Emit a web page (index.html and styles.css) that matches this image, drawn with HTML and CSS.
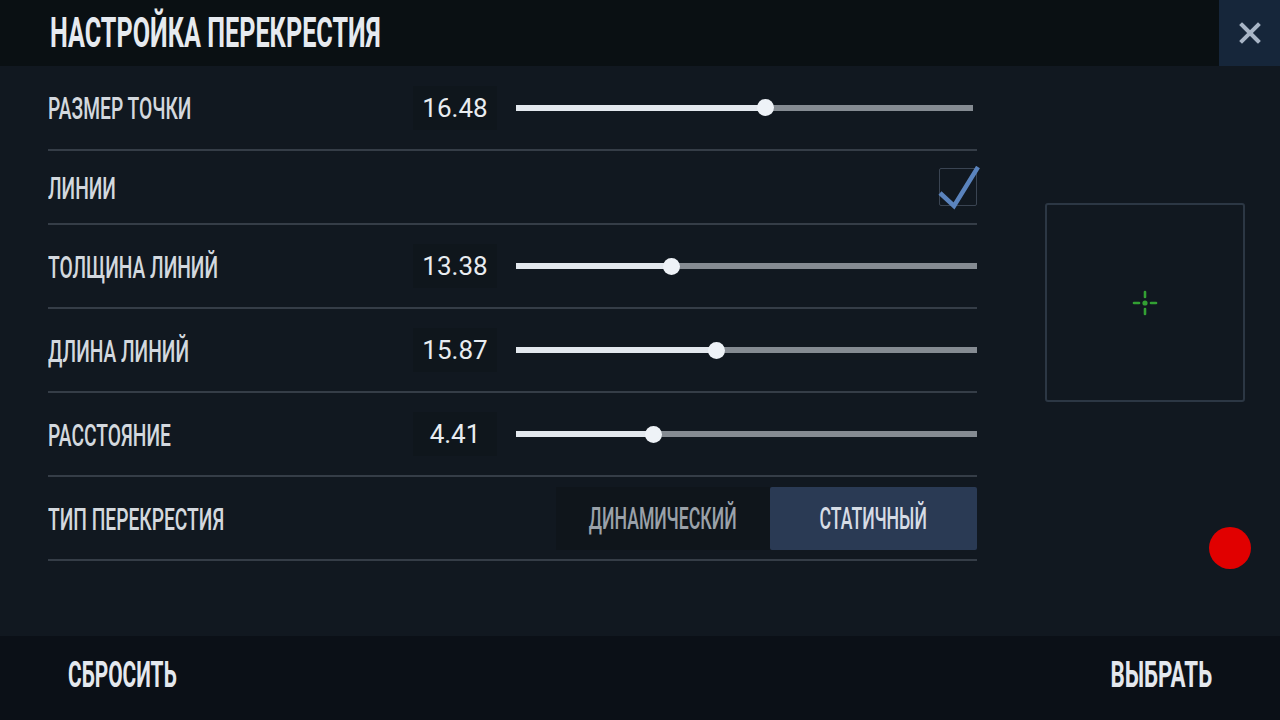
FILE: index.html
```html
<!DOCTYPE html>
<html lang="ru">

<head>
<meta charset="UTF-8">
<meta name="viewport" content="width=device-width, initial-scale=1.0">
<title>Настройка перекрестия</title>
<link rel="stylesheet" href="styles.css">
</head>

<body>

<div class="screen">
    <div class="topbar">
        <h1 class="title"><span class="squeeze">Настройка перекрестия</span></h1>
        <button class="close-btn" aria-label="Закрыть">
            <svg width="22" height="22" viewBox="0 0 22 22">
                <path d="M3 3 L19 19 M19 3 L3 19" stroke="#a8b5c6" stroke-width="4" stroke-linecap="square"/>
            </svg>
        </button>
    </div>

    <div class="main">
        <div class="settings">
            <div class="row row-first">
                <div class="label"><span class="squeeze">Размер точки</span></div>
                <div class="value">16.48</div>
                <div class="slider slider-short">
                    <div class="slider-fill" style="width: 54.7%"></div>
                    <div class="slider-thumb" style="left: 54.7%"></div>
                </div>
            </div>

            <div class="row row-short">
                <div class="label"><span class="squeeze">Линии</span></div>
                <div class="checkbox">
                    <svg width="44" height="46" viewBox="0 0 44 46">
                        <path d="M2 27 L16 40 L40 1" fill="none" stroke="#5a83bd" stroke-width="4.5" stroke-linejoin="miter"/>
                    </svg>
                </div>
            </div>

            <div class="row">
                <div class="label"><span class="squeeze">Толщина линий</span></div>
                <div class="value">13.38</div>
                <div class="slider">
                    <div class="slider-fill" style="width: 33.8%"></div>
                    <div class="slider-thumb" style="left: 33.8%"></div>
                </div>
            </div>

            <div class="row">
                <div class="label"><span class="squeeze">Длина линий</span></div>
                <div class="value">15.87</div>
                <div class="slider">
                    <div class="slider-fill" style="width: 43.6%"></div>
                    <div class="slider-thumb" style="left: 43.6%"></div>
                </div>
            </div>

            <div class="row">
                <div class="label"><span class="squeeze">Расстояние</span></div>
                <div class="value">4.41</div>
                <div class="slider">
                    <div class="slider-fill" style="width: 29.9%"></div>
                    <div class="slider-thumb" style="left: 29.9%"></div>
                </div>
            </div>

            <div class="row">
                <div class="label"><span class="squeeze">Тип перекрестия</span></div>
                <div class="segments">
                    <div class="segment"><span class="squeeze-c">Динамический</span></div>
                    <div class="segment segment-active"><span class="squeeze-c">Статичный</span></div>
                </div>
            </div>
        </div>

        <div class="preview-col">
            <div class="preview">
                <svg width="30" height="30" viewBox="0 0 30 30">
                    <g stroke="#33a033" stroke-width="2.6" stroke-linecap="round">
                        <line x1="4" y1="15" x2="9" y2="15"/>
                        <line x1="21" y1="15" x2="26" y2="15"/>
                        <line x1="15" y1="4" x2="15" y2="9"/>
                        <line x1="15" y1="21" x2="15" y2="26"/>
                    </g>
                    <circle cx="15" cy="15" r="2.6" fill="#33a033"/>
                </svg>
            </div>
        </div>
    </div>

    <div class="footer">
        <button class="footer-btn"><span class="squeeze">Сбросить</span></button>
        <button class="footer-btn"><span class="squeeze-r">Выбрать</span></button>
    </div>

    <div class="rec-dot"></div>
</div>

</body>

</html>
```

FILE: styles.css
```css
body {
    margin: 0;
    background-color: #111820;
    font-family: Roboto, "Liberation Sans", sans-serif;
    color: #d3d8de;
}

.screen {
    position: relative;
    width: 1280px;
    height: 720px;
    display: flex;
    flex-direction: column;
    overflow: hidden;
}

/* condensed look: the game font is a narrow caps face */
.squeeze,
.squeeze-c,
.squeeze-r {
    display: inline-block;
    white-space: nowrap;
    text-transform: uppercase;
    transform: scaleX(0.62);
    transform-origin: left center;
}

.squeeze-c {
    transform: scaleX(0.57);
    transform-origin: center center;
}

.squeeze-r {
    transform-origin: right center;
}

.topbar {
    height: 66px;
    flex: none;
    display: flex;
    align-items: center;
    justify-content: space-between;
    background-color: #0a1013;
}

.title {
    margin: 0 0 0 50px;
    font-size: 42px;
    font-weight: 700;
    color: #e6eaef;
    line-height: 1;
}

.title .squeeze {
    transform: scaleX(0.6);
}

.close-btn {
    width: 61px;
    height: 66px;
    border: none;
    padding: 0;
    background-color: #16263a;
    display: flex;
    align-items: center;
    justify-content: center;
}

.main {
    flex: 1;
    display: flex;
}

.settings {
    width: 929px;
    margin-left: 48px;
}

.row {
    height: 84px;
    box-sizing: border-box;
    border-bottom: 2px solid #353d47;
    display: grid;
    grid-template-columns: 365px 84px 1fr;
    align-items: center;
}

.row-first {
    height: 85px;
}

.row-short {
    height: 74px;
    grid-template-columns: 1fr auto;
}

.label {
    font-size: 31px;
    font-weight: 500;
    color: #d3d8de;
    line-height: 1;
    padding-top: 2px;
}

.value {
    height: 44px;
    display: flex;
    align-items: center;
    justify-content: center;
    background-color: #0f161c;
    font-size: 26px;
    color: #e8ecf0;
}

.slider {
    position: relative;
    height: 6px;
    margin-left: 19px;
    background-color: #858b92;
}

.slider-short {
    margin-right: 4px;
}

.slider-fill {
    height: 100%;
    background-color: #e3e8ee;
}

.slider-thumb {
    position: absolute;
    top: 50%;
    width: 17px;
    height: 17px;
    margin: -8.5px 0 0 -8.5px;
    border-radius: 50%;
    background-color: #eef2f7;
}

.checkbox {
    position: relative;
    width: 36px;
    height: 36px;
    border: 1.5px solid #3a4452;
    border-radius: 2px;
}

.checkbox svg {
    position: absolute;
    left: -2px;
    top: -3px;
}

.segments {
    grid-column: 2 / 4;
    justify-self: end;
    display: flex;
    height: 63px;
}

.segment {
    width: 214px;
    display: flex;
    align-items: center;
    justify-content: center;
    background-color: #0f151b;
    font-size: 31px;
    font-weight: 500;
    color: #9aa1a9;
}

.segment-active {
    width: 207px;
    background-color: #2a3a54;
    color: #d6dce5;
    border-radius: 2px;
}

.preview-col {
    flex: 1;
    padding: 137px 0 0 68px;
}

.preview {
    width: 196px;
    height: 195px;
    border: 2px solid #2c3744;
    border-radius: 3px;
    display: flex;
    align-items: center;
    justify-content: center;
}

.footer {
    height: 84px;
    flex: none;
    display: flex;
    align-items: center;
    justify-content: space-between;
    background-color: #0b1017;
    padding: 0 68px;
}

.footer-btn {
    border: none;
    background: none;
    padding: 0 0 6px;
    font-family: Roboto, "Liberation Sans", sans-serif;
    font-size: 36px;
    font-weight: 700;
    color: #e4e8ee;
    line-height: 1;
}

.footer-btn .squeeze {
    transform: scaleX(0.58);
}

.rec-dot {
    position: absolute;
    left: 1209px;
    top: 527px;
    width: 42px;
    height: 42px;
    border-radius: 50%;
    background-color: #e10000;
}
```
